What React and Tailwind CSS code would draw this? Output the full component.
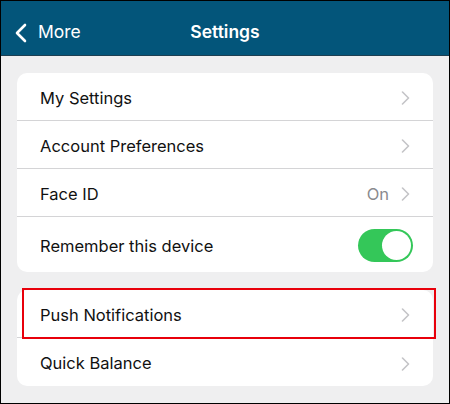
import React from 'react';

const Chevron = () => (
  <svg width="9" height="14" viewBox="0 0 9 14" fill="none" className="shrink-0">
    <path d="M1.5 1 L7.5 7 L1.5 13" stroke="#c4c4c7" strokeWidth="1.6" strokeLinecap="round" strokeLinejoin="round" />
  </svg>
);

const Row = ({ label, right, last, tall }) => (
  <div
    className={`flex items-center justify-between pl-[23px] pr-[23px] pt-[3px] ${tall ? 'h-[55px]' : 'h-[48px]'} ${last ? '' : 'border-b border-[#d4d4d6]'}`}
  >
    <span className="text-[16.5px] text-[#111]">{label}</span>
    {right !== undefined ? right : <Chevron />}
  </div>
);

const Toggle = () => (
  <div className="w-[55px] h-[33px] rounded-full bg-[#34c759] flex items-center justify-end p-[2px] mr-[-3px] mt-[-2px]">
    <div className="w-[29px] h-[29px] rounded-full bg-white" />
  </div>
);

export default function App() {
  return (
    <div
      className="w-[450px] h-[404px] border border-black bg-[#efeff0] relative overflow-hidden"
      style={{ fontFamily: 'Inter, "Noto Sans", sans-serif' }}
    >
      <div className="h-[55px] bg-[#03557a] border-b border-[#1d3f52] flex items-center relative pt-[9px]">
        <div className="flex items-center pl-[13px] gap-[10px] text-white">
          <svg width="14" height="20" viewBox="0 0 14 20" fill="none">
            <path d="M11 2 L3 10 L11 18" stroke="white" strokeWidth="2.6" strokeLinecap="round" strokeLinejoin="round" />
          </svg>
          <span className="text-[17.5px]">More</span>
        </div>
        <div className="absolute inset-0 pt-[9px] flex items-center justify-center pointer-events-none">
          <span className="text-white text-[17.5px] font-semibold">Settings</span>
        </div>
      </div>

      <div className="px-[16px] pt-[17px] flex flex-col gap-[18px]">
        <div className="bg-white rounded-[10px] overflow-hidden">
          <Row label="My Settings" />
          <Row label="Account Preferences" />
          <Row
            label="Face ID"
            right={
              <div className="flex items-center gap-[12px]">
                <span className="text-[16.5px] text-[#8a8a8e]">On</span>
                <Chevron />
              </div>
            }
          />
          <Row label="Remember this device" right={<Toggle />} last tall />
        </div>

        <div className="bg-white rounded-[10px] overflow-hidden">
          <Row label="Push Notifications" />
          <Row label="Quick Balance" last />
        </div>
      </div>

      <div className="absolute left-[21px] top-[287px] w-[414px] h-[51px] border-2 border-[#e8000b] pointer-events-none" />
    </div>
  );
}
